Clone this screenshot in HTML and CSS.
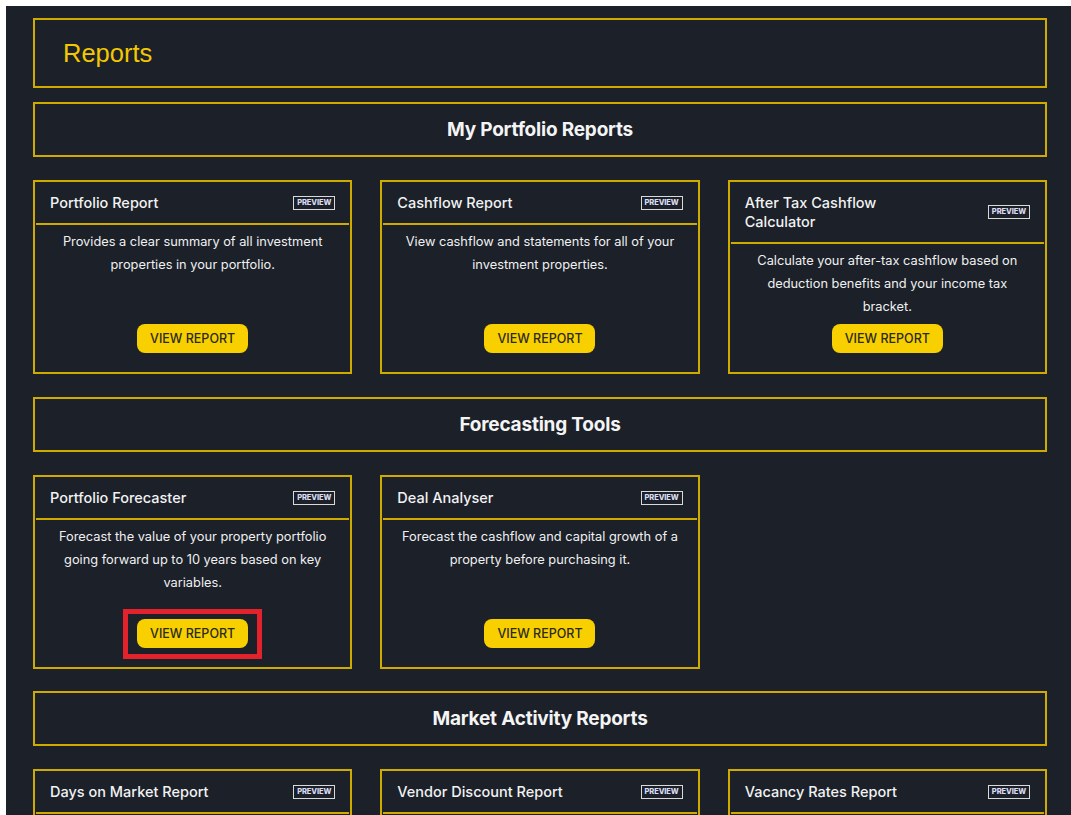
FILE: index.html
```html
<!DOCTYPE html>
<html lang="en">
<head>
<meta charset="utf-8">
<title>Reports</title>
<link rel="stylesheet" href="styles.css">
</head>
<body>
<div class="page">
  <header class="page-head">
    <h1>Reports</h1>
  </header>

  <section class="group">
    <h2 class="group-title">My Portfolio Reports</h2>
    <div class="cards">
      <article class="card">
        <div class="card-head"><h3>Portfolio Report</h3><span class="badge">PREVIEW</span></div>
        <div class="card-body">
          <p>Provides a clear summary of all investment properties in your portfolio.</p>
          <a class="btn" href="#">VIEW REPORT</a>
        </div>
      </article>
      <article class="card">
        <div class="card-head"><h3>Cashflow Report</h3><span class="badge">PREVIEW</span></div>
        <div class="card-body">
          <p>View cashflow and statements for all of your investment properties.</p>
          <a class="btn" href="#">VIEW REPORT</a>
        </div>
      </article>
      <article class="card">
        <div class="card-head"><h3>After Tax Cashflow<br>Calculator</h3><span class="badge">PREVIEW</span></div>
        <div class="card-body">
          <p>Calculate your after-tax cashflow based on deduction benefits and your income tax bracket.</p>
          <a class="btn" href="#">VIEW REPORT</a>
        </div>
      </article>
    </div>
  </section>

  <section class="group">
    <h2 class="group-title">Forecasting Tools</h2>
    <div class="cards">
      <article class="card">
        <div class="card-head"><h3>Portfolio Forecaster</h3><span class="badge">PREVIEW</span></div>
        <div class="card-body">
          <p>Forecast the value of your property portfolio going forward up to 10 years based on key variables.</p>
          <a class="btn btn-marked" href="#">VIEW REPORT<span class="mark"></span></a>
        </div>
      </article>
      <article class="card">
        <div class="card-head"><h3>Deal Analyser</h3><span class="badge">PREVIEW</span></div>
        <div class="card-body">
          <p>Forecast the cashflow and capital growth of a property before purchasing it.</p>
          <a class="btn" href="#">VIEW REPORT</a>
        </div>
      </article>
    </div>
  </section>

  <section class="group">
    <h2 class="group-title">Market Activity Reports</h2>
    <div class="cards">
      <article class="card">
        <div class="card-head"><h3>Days on Market Report</h3><span class="badge">PREVIEW</span></div>
        <div class="card-body">
          <p>See how long properties take to sell in your chosen suburbs.</p>
          <a class="btn" href="#">VIEW REPORT</a>
        </div>
      </article>
      <article class="card">
        <div class="card-head"><h3>Vendor Discount Report</h3><span class="badge">PREVIEW</span></div>
        <div class="card-body">
          <p>Compare listing prices against final sale prices by suburb.</p>
          <a class="btn" href="#">VIEW REPORT</a>
        </div>
      </article>
      <article class="card">
        <div class="card-head"><h3>Vacancy Rates Report</h3><span class="badge">PREVIEW</span></div>
        <div class="card-body">
          <p>Track rental vacancy rates across your target markets.</p>
          <a class="btn" href="#">VIEW REPORT</a>
        </div>
      </article>
    </div>
  </section>
</div>
</body>
</html>
```

FILE: styles.css
```css
html, body {
  margin: 0;
  padding: 0;
  background: #ffffff;
  overflow: hidden;
}

.page {
  margin: 6px 0 0 6px;
  min-height: calc(100vh - 6px);
  background: #1b2029;
  padding: 12px 24px 40px 27px;
  box-sizing: border-box;
  font-family: Inter, "Noto Sans", sans-serif;
  color: #f2f2f2;
}

.page-head {
  border: 2px solid #cfab00;
  height: 70px;
  box-sizing: border-box;
  display: flex;
  align-items: center;
  padding-left: 28px;
}

.page-head h1 {
  margin: 0;
  font-family: "Liberation Sans", Arial, sans-serif;
  font-weight: 400;
  font-size: 25.5px;
  color: #f4c800;
}

.group {
  margin-top: 14px;
}

.group + .group {
  margin-top: 23px;
}

.group:last-child {
  margin-top: 22px;
}

.group-title {
  margin: 0;
  border: 2px solid #cfab00;
  height: 55px;
  box-sizing: border-box;
  display: flex;
  align-items: center;
  justify-content: center;
  font-size: 19px;
  font-weight: 700;
  color: #f4f4f4;
  letter-spacing: -0.2px;
}

.cards {
  margin-top: 23px;
  display: grid;
  grid-template-columns: repeat(3, 1fr);
  column-gap: 28px;
}

.card {
  border: 2px solid #cfab00;
  height: 194px;
  box-sizing: border-box;
  display: flex;
  flex-direction: column;
}

.card-head {
  display: flex;
  align-items: center;
  justify-content: space-between;
  padding: 11px 14px 11px 14px;
  border-bottom: 2px solid #cfab00;
  margin: 0 1px;
}

.card-head h3 {
  margin: 0;
  font-size: 14.5px;
  font-weight: 500;
  line-height: 19px;
  color: #f2f2f2;
}

.badge {
  border: 1.5px solid #d9d9d9;
  font-size: 7.5px;
  font-weight: 800;
  line-height: 10px;
  padding: 1px 3px;
  color: #dcdcf0;
  letter-spacing: -0.1px;
}

.card-body {
  flex: 1;
  display: flex;
  flex-direction: column;
  align-items: center;
  padding: 5px 19px 19px;
}

.card-body p {
  margin: 0;
  text-align: center;
  font-size: 12.8px;
  line-height: 23px;
  color: #f0f0f0;
}

.btn {
  position: relative;
  margin-top: auto;
  display: inline-block;
  width: 111px;
  height: 29px;
  box-sizing: border-box;
  line-height: 29px;
  text-align: center;
  border-radius: 8px;
  background: #f8d000;
  color: #2b2a1e;
  font-size: 12.5px;
  font-weight: 500;
  text-decoration: none;
}

/* red highlight drawn around one button */
.mark {
  position: absolute;
  top: -10px;
  left: -14px;
  right: -14px;
  bottom: -11px;
  border: 5px solid #e3222b;
}
```
